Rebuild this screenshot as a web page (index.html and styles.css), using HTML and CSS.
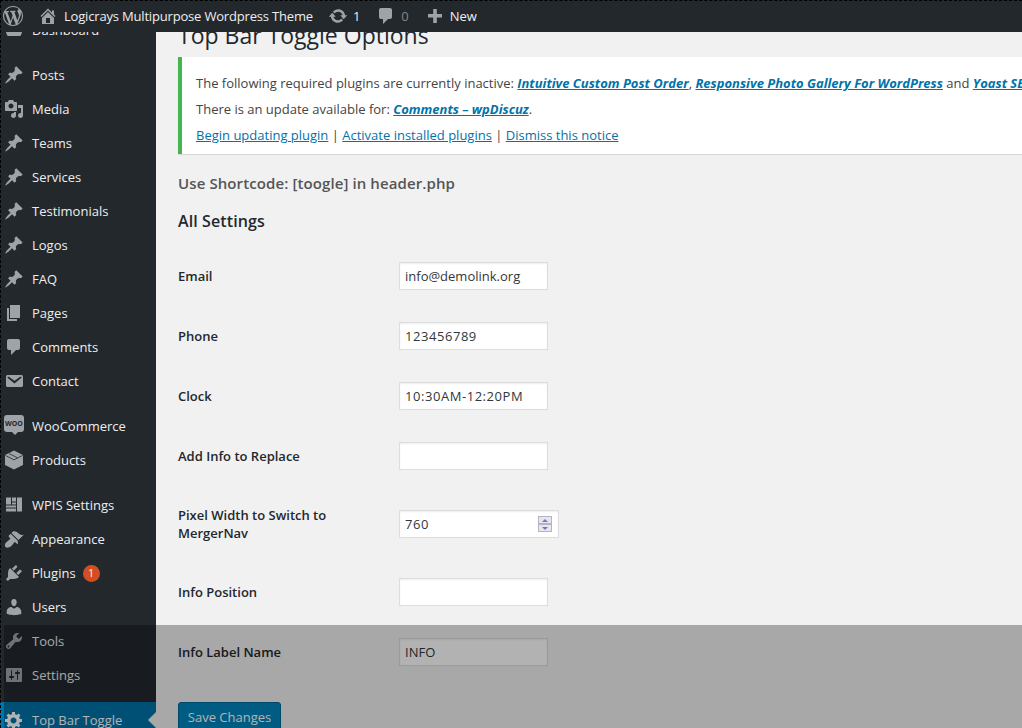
FILE: index.html
```html
<!DOCTYPE html>
<html lang="en">
<head>
    <meta charset="UTF-8" />
    <title>Top Bar Toggle Options</title>
    <link rel="stylesheet" href="styles.css">
</head>
<body>
    <svg class="sprite" width="0" height="0">
        <symbol id="pin" viewBox="0 0 20 20"><path d="M10.44 3.02l1.82-1.82 6.36 6.35-1.83 1.82c-1.05-.68-2.48-.57-3.41.36l-.75.75c-.92.93-1.04 2.35-.35 3.41l-1.83 1.82-2.41-2.41-2.8 2.79c-.42.42-3.38 2.71-3.8 2.29s1.86-3.39 2.28-3.81l2.79-2.79L4.1 9.36l1.83-1.82c1.05.69 2.48.57 3.4-.36l.75-.75c.93-.92 1.05-2.35.36-3.41z"/></symbol>
    </svg>

    <div class="adminbar">
        <svg class="bar-logo" viewBox="0 0 20 20"><path d="M20 10c0-5.52-4.48-10-10-10S0 4.48 0 10s4.48 10 10 10 10-4.48 10-10zM7.78 15.37L4.37 6.22c.55-.02 1.17-.08 1.17-.08.5-.06.44-1.13-.06-1.11 0 0-1.45.11-2.37.11-.18 0-.37 0-.58-.01C4.12 2.69 6.87 1.11 10 1.11c2.33 0 4.45.87 6.05 2.34-.68-.11-1.65.39-1.65 1.58 0 .74.45 1.36.9 2.1.35.61.55 1.36.55 2.46 0 1.49-1.4 5-1.4 5l-3.03-8.37c.54-.02.82-.17.82-.17.5-.05.44-1.25-.06-1.22 0 0-1.44.12-2.38.12-.87 0-2.33-.12-2.33-.12-.5-.03-.56 1.2-.06 1.22l.92.08 1.26 3.41zM17.41 10c.24-.64.74-1.87.43-4.25.7 1.29 1.05 2.71 1.05 4.25 0 3.29-1.73 6.24-4.4 7.78.97-2.59 1.94-5.2 2.92-7.78zM6.1 18.09C3.12 16.65 1.11 13.53 1.11 10c0-1.3.23-2.48.72-3.59C3.25 10.3 4.67 14.2 6.1 18.09zm4.03-6.63l2.58 6.98c-.86.29-1.76.45-2.71.45-.79 0-1.57-.11-2.29-.33.81-2.38 1.62-4.74 2.42-7.1z"/></svg>
        <span class="bar-item bar-site">
            <svg class="bar-icon" viewBox="0 0 20 20"><path d="M16 8.5l1.53 1.53-1.06 1.06L10 4.62l-6.47 6.47-1.06-1.06L10 2.5l4 4v-2h2v4zm-6-2.46l6 5.99V18H4v-5.97zM12 17v-5H8v5h4z"/></svg>
            <span class="site-name">Logicrays Multipurpose Wordpress Theme</span>
        </span>
        <span class="bar-item bar-update">
            <svg class="bar-icon" viewBox="0 0 20 20"><path d="M10.2 3.28c3.53 0 6.43 2.61 6.92 6h2.08l-3.5 4-3.5-4h2.32c-.45-1.97-2.21-3.45-4.32-3.45-1.45 0-2.73.71-3.54 1.78L4.95 5.66C6.23 4.2 8.11 3.28 10.2 3.28zm-.4 13.44c-3.52 0-6.43-2.61-6.92-6H.8l3.5-4c1.17 1.33 2.33 2.67 3.5 4H5.48c.45 1.97 2.21 3.45 4.32 3.45 1.45 0 2.73-.71 3.54-1.78l1.71 1.95c-1.28 1.46-3.15 2.38-5.25 2.38z"/></svg>
            1
        </span>
        <span class="bar-item bar-comments">
            <svg class="bar-icon" viewBox="0 0 20 20"><path d="M5 2h9c1.1 0 2 .9 2 2v7c0 1.1-.9 2-2 2h-2l-5 5v-5H5c-1.1 0-2-.9-2-2V4c0-1.1.9-2 2-2z"/></svg>
            <span class="count-zero">0</span>
        </span>
        <span class="bar-item bar-new">
            <svg class="bar-icon" viewBox="0 0 20 20"><path d="M17 8v3.5h-5.2V17H8.2v-5.500H3V8h5.200V3h3.600v5z"/></svg>
            New
        </span>
    </div>

    <div class="wrap">
        <ul class="sidemenu">
            <li class="item"><svg class="icon" viewBox="0 0 20 20"><path d="M3.760 16h12.480c1.100-1.370 1.760-3.110 1.760-5 0-4.420-3.580-8-8-8s-8 3.580-8 8c0 1.890.660 3.630 1.760 5z"/></svg>Dashboard</li>
            <li class="item sep"><svg class="icon"><use href="#pin"/></svg>Posts</li>
            <li class="item"><svg class="icon" viewBox="0 0 20 20"><path d="M13 11V4c0-.55-.45-1-1-1h-1.670L9 1H5L3.670 3H2c-.55 0-1 .45-1 1v7c0 .55.45 1 1 1h10c.55 0 1-.45 1-1zM7 4.500c1.380 0 2.500 1.120 2.500 2.500S8.380 9.500 7 9.500 4.500 8.380 4.500 7 5.620 4.500 7 4.500zM14 6h5v10.500c0 1.380-1.120 2.500-2.500 2.500S14 17.880 14 16.500s1.120-2.500 2.500-2.500c.17 0 .34.02.5.05V9h-3V6zm-4 8.050V13h2v3.500c0 1.380-1.120 2.500-2.500 2.500S7 17.880 7 16.500 8.120 14 9.500 14c.17 0 .34.02.5.05z"/></svg>Media</li>
            <li class="item"><svg class="icon"><use href="#pin"/></svg>Teams</li>
            <li class="item"><svg class="icon"><use href="#pin"/></svg>Services</li>
            <li class="item"><svg class="icon"><use href="#pin"/></svg>Testimonials</li>
            <li class="item"><svg class="icon"><use href="#pin"/></svg>Logos</li>
            <li class="item"><svg class="icon"><use href="#pin"/></svg>FAQ</li>
            <li class="item"><svg class="icon" viewBox="0 0 20 20"><path d="M6 15V2h10v13H6zm-1 1h8v2H3V5h2v11z"/></svg>Pages</li>
            <li class="item"><svg class="icon" viewBox="0 0 20 20"><path d="M5 2h9c1.100 0 2 .9 2 2v7c0 1.100-.9 2-2 2h-2l-5 5v-5H5c-1.100 0-2-.9-2-2V4c0-1.100.9-2 2-2z"/></svg>Comments</li>
            <li class="item"><svg class="icon" viewBox="0 0 20 20"><path d="M3.870 4h13.250C18.370 4 19 4.590 19 5.790v8.420c0 1.190-.63 1.790-1.880 1.790H3.870c-1.250 0-1.880-.6-1.880-1.790V5.790c0-1.200.63-1.790 1.880-1.790zm6.620 8.600l6.740-5.530c.24-.2.43-.66.13-1.070-.29-.41-.82-.42-1.170-.17l-5.700 3.860L4.800 5.830c-.35-.25-.88-.24-1.170.17-.3.41-.11.87.13 1.070z"/></svg>Contact</li>
            <li class="item sep"><span class="woo">WOO</span>WooCommerce</li>
            <li class="item"><svg class="icon" viewBox="0 0 20 20"><path d="M10 0.500l9 4.500v10l-9 4.500-9-4.500V5z"/><path class="cut" d="M1.500 5.500L10 9.800l8.500-4.300M5 3.500L13.500 7.800"/></svg>Products</li>
            <li class="item sep"><svg class="icon" viewBox="0 0 20 20"><path d="M2 2.500h5v7H2zM8 2.500h4v4H8zM8 7.500h4v2H8zM2 10.500h10v2H2zM2 13.500h10v3H2zM13 2.500h5v14h-5z"/></svg>WPIS Settings</li>
            <li class="item"><svg class="icon" viewBox="0 0 20 20"><path d="M14.480 11.060L7.410 3.990l1.500-1.500c.5-.56 2.300-.47 3.510.32 1.210.8 1.430 1.280 2.910 2.100 1.180.64 2.450 1.260 4.450.85zm-.71.71L6.700 4.700 4.930 6.470c-.39.39-.39 1.020 0 1.410l1.060 1.060c.39.39.39 1.030 0 1.420-.6.6-1.430 1.110-2.210 1.690-.35.26-.7.53-1.010.84C1.430 13.230.1 16.590 1.520 18.010c1.440 1.440 4.770.12 6.120-1.240.31-.31.58-.66.84-1.010.58-.78 1.090-1.610 1.690-2.210.39-.39 1.020-.39 1.410 0l1.060 1.060c.39.39 1.020.39 1.410 0z"/></svg>Appearance</li>
            <li class="item"><svg class="icon" viewBox="0 0 20 20"><path d="M13.110 4.360L9.870 7.600 8 5.730l3.240-3.240c.35-.34 1.050-.2 1.560.32.52.51.66 1.210.31 1.550zm-8 1.770l.91-1.120 9.010 9.010-1.190.84c-.71.71-2.630 1.160-3.820 1.160H6.140L4.900 17.260c-.59.59-1.540.59-2.120 0-.59-.58-.59-1.530 0-2.120l1.240-1.240v-3.880c0-1.130.4-3.190 1.090-3.890zm7.260 3.970l3.240-3.240c.34-.35 1.040-.21 1.550.31.52.51.66 1.210.31 1.550l-3.240 3.250z"/></svg>Plugins<span class="badge">1</span></li>
            <li class="item"><svg class="icon" viewBox="0 0 20 20"><path d="M10 9.250c-2.270 0-2.730-3.440-2.730-3.440C7 4.020 7.820 2 9.970 2c2.160 0 2.980 2.020 2.710 3.810 0 0-.41 3.440-2.680 3.440zm0 2.570L12.720 10c2.390 0 4.520 2.330 4.520 4.530v2.490s-3.650 1.130-7.240 1.130c-3.650 0-7.240-1.130-7.240-1.130v-2.490c0-2.250 1.940-4.480 4.470-4.480z"/></svg>Users</li>
            <li class="item"><svg class="icon" viewBox="0 0 20 20"><path d="M16.680 9.770c-1.340 1.340-3.300 1.670-4.950.99l-5.410 6.520c-.99.99-2.590.99-3.580 0s-.99-2.590 0-3.570l6.520-5.420c-.68-1.650-.35-3.610.99-4.950 1.280-1.280 3.120-1.620 4.720-1.060l-2.890 2.890 2.820 2.820 2.860-2.870c.53 1.580.18 3.390-1.080 4.650zM3.810 16.210c.4.39 1.040.39 1.430 0 .4-.4.4-1.040 0-1.430-.39-.4-1.030-.4-1.430 0-.39.39-.39 1.030 0 1.430z"/></svg>Tools</li>
            <li class="item"><svg class="icon" viewBox="0 0 20 20"><path d="M18 16V4c0-.55-.45-1-1-1H3c-.55 0-1 .45-1 1v12c0 .55.45 1 1 1h14c.55 0 1-.45 1-1zM8 11h1c.55 0 1 .45 1 1s-.45 1-1 1H8v1.500c0 .28-.22.5-.5.5s-.5-.22-.5-.5V13H6c-.55 0-1-.45-1-1s.45-1 1-1h1V5.500c0-.28.22-.5.5-.5s.5.22.5.5V11zm5-2h-1c-.55 0-1-.45-1-1s.45-1 1-1h1V5.500c0-.28.22-.5.5-.5s.5.22.5.5V7h1c.55 0 1 .45 1 1s-.45 1-1 1h-1v5.500c0 .28-.22.5-.5.5s-.5-.22-.5-.5V9z"/></svg>Settings</li>
            <li class="item current"><svg class="icon" viewBox="0 0 20 20"><path d="M18 12h-2.180c-.17.7-.44 1.350-.81 1.930l1.540 1.540-2.100 2.100-1.540-1.540c-.58.36-1.230.63-1.910.79V19H8v-2.180c-.68-.16-1.330-.43-1.910-.79l-1.540 1.540-2.120-2.120 1.540-1.540c-.36-.58-.63-1.230-.79-1.910H1V9.030h2.170c.16-.7.44-1.350.8-1.940L2.430 5.550l2.100-2.100 1.540 1.540c.58-.37 1.240-.64 1.930-.81V2h3v2.180c.68.16 1.330.43 1.910.79l1.540-1.540 2.120 2.120-1.540 1.540c.36.59.64 1.240.8 1.940H18V12zm-8.500 1.500c1.660 0 3-1.340 3-3s-1.340-3-3-3-3 1.340-3 3 1.340 3 3 3z"/></svg>Top Bar Toggle</li>
        </ul>

        <div class="main">
            <h1 class="titulo">Top Bar Toggle Options</h1>

            <div class="notice">
                <p>The following required plugins are currently inactive: <a href="#" class="plugin">Intuitive Custom Post Order</a>, <a href="#" class="plugin">Responsive Photo Gallery For WordPress</a> and <a href="#" class="plugin">Yoast SEO</a>.</p>
                <p>There is an update available for: <a href="#" class="plugin">Comments – wpDiscuz</a>.</p>
                <p><a href="#">Begin updating plugin</a> | <a href="#">Activate installed plugins</a> | <a href="#">Dismiss this notice</a></p>
            </div>

            <h3 class="shortcode">Use Shortcode: [toogle] in header.php</h3>
            <h2 class="subtitulo">All Settings</h2>

            <form name="topbar">
                <table class="form-table">
                    <tr><th><label for="email">Email</label></th><td><input type="text" id="email" value="info@demolink.org"></td></tr>
                    <tr><th><label for="phone">Phone</label></th><td><input type="text" id="phone" class="digits" value="123456789"></td></tr>
                    <tr><th><label for="clock">Clock</label></th><td><input type="text" id="clock" class="digits" value="10:30AM-12:20PM"></td></tr>
                    <tr><th><label for="replace">Add Info to Replace</label></th><td><input type="text" id="replace"></td></tr>
                    <tr class="tall"><th><label for="pixel">Pixel Width to Switch to MergerNav</label></th><td>
                        <div class="numero">
                            <input type="number" id="pixel" class="digits" value="760">
                            <span class="spin"><i class="spin-up"></i><i class="spin-down"></i></span>
                        </div>
                    </td></tr>
                    <tr><th><label for="position">Info Position</label></th><td><input type="text" id="position"></td></tr>
                    <tr><th><label for="labelname">Info Label Name</label></th><td><input type="text" id="labelname" value="INFO"></td></tr>
                </table>
                <button type="button" class="guardar">Save Changes</button>
            </form>
        </div>
    </div>

    <div class="shade"></div>
    <div class="ants"></div>
</body>
</html>
```

FILE: styles.css
```css
html, body {
    margin: 0;
    height: 100%;
    overflow: hidden;
}
body {
    position: relative;
    background: #f1f1f1;
    color: #444;
    font-family: "Open Sans", sans-serif;
    font-size: 13px;
}
.sprite {
    position: absolute;
}

/* barra superior */
.adminbar {
    position: absolute;
    top: 0;
    left: 0;
    right: 0;
    height: 32px;
    z-index: 10;
    display: flex;
    align-items: center;
    background: #23282d;
    color: #eee;
    font-size: 13px;
}
.bar-logo {
    width: 20px;
    height: 20px;
    margin-left: 3px;
    fill: #9ea3a8;
}
.bar-item {
    display: flex;
    align-items: center;
    gap: 5px;
}
.bar-icon {
    width: 20px;
    height: 20px;
    fill: #9ea3a8;
}
.bar-site {
    margin-left: 15px;
    gap: 6px;
}
.site-name {
    letter-spacing: -0.18px;
}
.bar-update {
    margin-left: 15px;
}
.bar-comments {
    margin-left: 16px;
}
.bar-new {
    margin-left: 16px;
}
.count-zero {
    color: #82878c;
}

.wrap {
    display: flex;
    height: 100%;
}

/* menu lateral */
.sidemenu {
    width: 156px;
    flex: none;
    margin: 0;
    padding: 13px 0 0;
    list-style: none;
    background: #23282d;
    color: #eee;
}
.item {
    display: flex;
    align-items: center;
    height: 34px;
    padding-left: 4px;
    position: relative;
}
.sep {
    margin-top: 11px;
}
.icon {
    width: 20px;
    height: 20px;
    flex: none;
    margin-right: 8px;
    fill: #9ea3a8;
}
.cut {
    fill: none;
    stroke: #23282d;
    stroke-width: 0.8;
}
.woo {
    position: relative;
    width: 20px;
    height: 17px;
    flex: none;
    margin: 0 8px 5px 0;
    border-radius: 3px;
    background: #9ea3a8;
    color: #23282d;
    font-size: 7px;
    font-weight: 700;
    line-height: 17px;
    text-align: center;
}
.woo::after {
    content: "";
    position: absolute;
    left: 8px;
    top: 17px;
    border: 3px solid transparent;
    border-top-color: #9ea3a8;
    border-bottom: 0;
}
.badge {
    width: 17px;
    height: 17px;
    margin-left: 7px;
    border-radius: 50%;
    background: #d54e21;
    color: #fff;
    font-size: 10px;
    line-height: 17px;
    text-align: center;
}
.current {
    height: 36px;
    margin-top: 10px;
    background: #0073aa;
    color: #fff;
}
.current .icon {
    fill: #fff;
}
.current::after {
    content: "";
    position: absolute;
    right: 0;
    top: 10px;
    border: 8px solid transparent;
    border-left: 0;
    border-right-color: #f1f1f1;
}

/* contenido */
.main {
    flex: 1;
    min-width: 0;
    overflow: hidden;
    padding-left: 22px;
    background: #f1f1f1;
}
.titulo {
    margin: 21px 0 7px;
    color: #23282d;
    font-size: 23px;
    font-weight: 400;
    line-height: 29px;
}
.notice {
    padding: 17px 0 2px 14px;
    background: #fff;
    border-left: 4px solid #46b450;
    box-shadow: 0 1px 1px rgba(0, 0, 0, 0.1);
    white-space: nowrap;
    font-size: 13px;
    color: #444;
}
.notice p {
    margin: 0 0 8px;
    line-height: 18px;
}
.notice a {
    color: #0073aa;
}
.plugin {
    font-weight: 700;
    font-style: italic;
}
.shortcode {
    margin: 20px 0 0;
    color: #555;
    font-size: 15px;
    font-weight: 600;
    line-height: 18px;
    letter-spacing: 0.1px;
}
.subtitulo {
    margin: 18px 0 0;
    color: #23282d;
    font-size: 16px;
    font-weight: 600;
    line-height: 22px;
    letter-spacing: 0.1px;
}
.form-table {
    margin-top: 14px;
    border-collapse: collapse;
}
.form-table th {
    width: 200px;
    padding: 16px 21px 16px 0;
    text-align: left;
    color: #23282d;
    font-size: 13px;
    font-weight: 600;
    line-height: 18px;
}
.form-table td {
    padding: 16px 0;
}
.tall th {
    padding-top: 20px;
    padding-bottom: 20px;
}
.form-table input {
    display: block;
    box-sizing: border-box;
    width: 149px;
    height: 28px;
    margin: 0;
    padding: 3px 5px;
    border: 1px solid #ddd;
    background: #fff;
    box-shadow: inset 0 1px 2px rgba(0, 0, 0, 0.07);
    color: #32373c;
    font-family: "Open Sans", sans-serif;
    font-size: 13px;
}
.form-table .digits {
    letter-spacing: 0.55px;
}
.numero {
    position: relative;
    width: 160px;
}
.form-table input[type="number"] {
    width: 160px;
    appearance: textfield;
}
.spin {
    position: absolute;
    left: 139px;
    top: 6px;
    width: 14px;
    display: flex;
    flex-direction: column;
}
.spin i {
    box-sizing: border-box;
    height: 8px;
    border: 1px solid #b4b4c4;
    background: #e6e6ec;
    display: flex;
    align-items: center;
    justify-content: center;
}
.spin-up::before {
    content: "";
    border: 3px solid transparent;
    border-bottom: 3px solid #6d7cc0;
    border-top: 0;
}
.spin-down::before {
    content: "";
    border: 3px solid transparent;
    border-top: 3px solid #6d7cc0;
    border-bottom: 0;
}
.guardar {
    display: block;
    width: 103px;
    height: 30px;
    margin-top: 20px;
    border: 1px solid #006799;
    border-radius: 3px;
    background: #0085ba;
    color: #fff;
    font-family: "Open Sans", sans-serif;
    font-size: 13px;
}

/* capas de encima */
.shade {
    position: absolute;
    top: 625px;
    left: 4px;
    right: 0;
    bottom: 0;
    z-index: 20;
    background: rgba(0, 0, 0, 0.3);
}
.ants {
    position: absolute;
    inset: 0;
    z-index: 30;
    border-top: 1px dashed #000;
    border-left: 1px dashed #000;
}
```
